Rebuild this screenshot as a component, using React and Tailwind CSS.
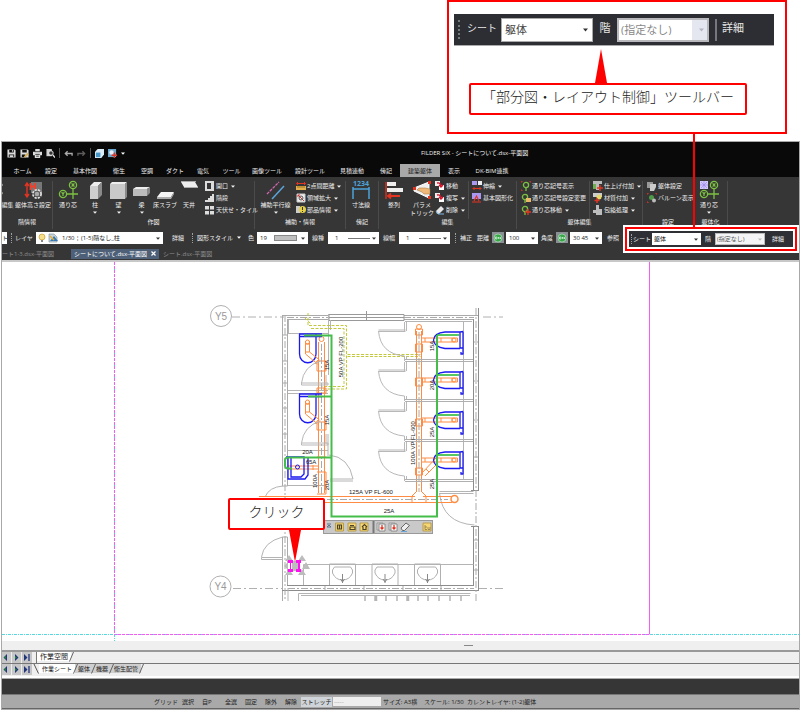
const FONT = "font-['Open_Sans','Noto_Sans_CJK_JP',sans-serif]";

const menuItems = [
    {label: 'ホーム', width: 'w-[29px]'},
    {label: '設定', width: 'w-[28px]'},
    {label: '基本作図', width: 'w-[40px]'},
    {label: '衛生', width: 'w-[28px]'},
    {label: '空調', width: 'w-[28px]'},
    {label: 'ダクト', width: 'w-[28px]'},
    {label: '電気', width: 'w-[28px]'},
    {label: 'ツール', width: 'w-[29px]'},
    {label: '画像ツール', width: 'w-[42px]'},
    {label: '設計ツール', width: 'w-[44px]'},
    {label: '見積連動', width: 'w-[40px]'},
    {label: '傍記', width: 'w-[28px]'},
    {label: '建築躯体', width: 'w-[40px]', active: true},
    {label: '表示', width: 'w-[28px]'},
    {label: 'DK-BIM連携', width: 'w-[48px]'}
];

function Caret({className = 'text-white'}) {
    return (
        <svg viewBox="0 0 4 3" className={`h-[3px] w-1 shrink-0 ${className}`}>
            <path d="M0 0.5h4L2 2.8z" fill="currentColor" />
        </svg>
    );
}

function Handle({className = 'w-2'}) {
    return (
        <span className={`flex shrink-0 justify-center ${className}`}>
            <span className="h-[10px] border-l border-dotted border-[#a0a0a0]" />
        </span>
    );
}

/* ---- title bar icons ---- */

const quickIcons = {
    save: (
        <>
            <path d="M0.500 0.500h8l1 1v8h-9z" fill="#dcdcdc" />
            <path d="M2.500 1h5v3h-5zM2 6h6v3H2z" fill="#111" />
            <path d="M3 7h4v2H3zM5.500 1h1v2h-1z" fill="#dcdcdc" />
        </>
    ),
    saveAs: (
        <>
            <path d="M0.500 0.500h8l1 1v8h-9z" fill="#dcdcdc" />
            <path d="M2.500 1h5v3h-5zM2 6h4v3H2z" fill="#111" />
            <path d="M5 9l4-4" stroke="#d8b05a" strokeWidth="2" />
        </>
    ),
    print: (
        <>
            <path d="M2.500 0h5v3h-5zM0 3h10v4H0zM2 6h6v4H2z" fill="#dcdcdc" />
            <path d="M2 3h6M2.500 6h5M3.500 8h3" stroke="#111" strokeWidth=".8" />
        </>
    ),
    preview: (
        <>
            <path d="M0.500 0h6v8h-6z" fill="#cfcfcf" />
            <circle cx="5.500" cy="4.500" r="2.500" fill="#333" stroke="#eee" />
            <path d="M7.500 6.500l2.500 3" stroke="#eee" strokeWidth="1.500" />
        </>
    ),
    undo: <path d="M9 7.500V5H1.500M4 2.500L1.500 5 4 7.500" stroke="#aaa" strokeWidth="1.500" fill="none" />,
    redo: <path d="M1 7.500V5h7.500M6 2.500L8.500 5 6 7.500" stroke="#5c5c5c" strokeWidth="1.500" fill="none" />,
    cube: (
        <>
            <path d="M0 3l3-3h7v6L7 10H0z" fill="#d9ecf7" />
            <path d="M1 4h5v5H1z" fill="#4696c8" />
        </>
    ),
    capture: (
        <>
            <path d="M0 0h9v9H0z" fill="#6aa5cc" />
            <circle cx="4" cy="4" r="2.500" fill="#e5eef5" />
            <path d="M7 4v6M4 7h6" stroke="#e33422" strokeWidth="1.600" />
        </>
    )
};

function QuickButton({icon, label}) {
    return (
        <button type="button" aria-label={label}>
            <svg viewBox="0 0 10 10" className="size-[9px]">{quickIcons[icon]}</svg>
        </button>
    );
}

/* ---- ribbon icons ---- */

function GridMark() {
    return (
        <g fill="none" stroke="#7cc142" strokeWidth="1.3">
            <circle cx="14" cy="4" r="3.6" />
            <circle cx="4" cy="13" r="3.6" />
            <path d="M14 8v10M8 13h11M12.6 2.4l2.8 3.2M15.4 2.4l-2.8 3.2M2.6 11.2L4 13l1.4-1.8M4 13v2" />
        </g>
    );
}

const bigIcons = {
    edit: <path d="M0 1h3l2 3-3 4 3 4-3 5H0z" fill="#b5b5a5" />,
    height: (
        <>
            <path d="M7 1h11v11H7z" fill="#777" />
            <path d="M3 3v12M1 5l2-3 2 3M1 13l2 3 2-3" stroke="#e33422" strokeWidth="1.4" fill="none" />
            <path d="M6.5 2v7M11 2v7M6.500 5.500h4.500" stroke="#f0402c" strokeWidth="1.8" fill="none" />
            <circle cx="13" cy="13" r="4" fill="none" stroke="#ddd" strokeWidth="2" strokeDasharray="2.2 1" />
            <circle cx="13" cy="13" r="2.800" fill="#aaa" stroke="#555" />
        </>
    ),
    grid: <GridMark />,
    column: (
        <>
            <path d="M4 5l4-4h8l-4 4z" fill="#eee" />
            <path d="M4 5h8v13H4z" fill="#cfcfcf" />
            <path d="M12 5l4-4v13l-4 4z" fill="#8a8a8a" />
        </>
    ),
    wall: (
        <>
            <path d="M1 3l2-2h15l-2 2z" fill="#eee" />
            <path d="M1 3h15v15H1z" fill="#c9c9c9" />
            <path d="M16 3l2-2v15l-2 2z" fill="#8a8a8a" />
        </>
    ),
    beam: (
        <>
            <path d="M1 8l3-2h14l-3 2z" fill="#eee" />
            <path d="M1 8h14v7H1z" fill="#bbb" />
            <path d="M15 8l3-2v6l-3 3z" fill="#888" />
        </>
    ),
    slab: (
        <>
            <path d="M1 16l4-5h13l-3 5z" fill="#f4f4f4" />
            <path d="M1 16h14v2H1zM15 16l3-5v2l-3 5z" fill="#aaa" />
        </>
    ),
    ceiling: (
        <>
            <path d="M1 1l3 5h14l-3-5z" fill="#eee" />
            <path d="M1 1h15v-1H1zM4 6h14v1H4z" fill="#aaa" />
        </>
    ),
    parallel: (
        <>
            <path d="M1 13L13 1" stroke="#d268b4" strokeWidth="1.300" strokeDasharray="3 1" />
            <path d="M6 18L18 5" stroke="#5aa5dc" strokeWidth="1.500" />
        </>
    ),
    dimension: (
        <>
            <path d="M1 8h16M1 6v12M17 6v12" stroke="#4ba3d8" strokeWidth="1.500" fill="none" />
            <text x="9" y="5" textAnchor="middle" fontSize="7" fontWeight="bold" fill="#4ba3d8">1234</text>
        </>
    ),
    align: (
        <>
            <path d="M1 1v17" stroke="#e33422" strokeWidth="1.300" />
            <path d="M2 1h9v4H2zM2 7h16v4H2z" fill="#eee" />
            <path d="M3 15h12M6 12.500L3 15l3 2.500" stroke="#e33422" strokeWidth="1.800" fill="none" />
        </>
    ),
    parametric: (
        <>
            <path d="M1 7L16 1v16L1 10z" fill="#eee" stroke="#fff" />
            <path d="M6 7h6l5 1v5h-6l-2-2-5-2z" fill="#eeb878" stroke="#a4713a" strokeWidth=".5" />
            <path d="M0 6h3v3H0zM15 0h3v3h-3zM15 15h3v3h-3z" fill="#e33422" />
        </>
    ),
    framing: (
        <>
            <path d="M0 0h8v8H0z" fill="#d5c8ff" />
            <path d="M1 1l6 6M7 1L1 7M4 0v8M0 4h8" stroke="#9d86e8" strokeWidth=".7" />
            <GridMark />
        </>
    )
};

const smallIcons = {
    opening: <path d="M0 0h9v10H0zM2 2v6h4V2z" fill="#ddd" fillRule="evenodd" />,
    stairs: <path d="M0 9h9V1H7v2H5v2H3v2H0z" fill="#ddd" />,
    tiles: <path d="M0 1h4v3.500H0zM5 1h4v3.500H5zM0 6h4v3.500H0zM5 6h4v3.500H5z" fill="#ddd" />,
    ruler: (
        <>
            <path d="M0 5h10v4H0z" fill="#e3b04b" />
            <path d="M1 2.500h8M2 1L.5 2.500 2 4M8 1l1.500 1.500L8 4" stroke="#e33422" fill="none" />
            <path d="M2 5v2M4 5v2M6 5v2M8 5v2" stroke="#6c4c10" strokeWidth=".6" />
        </>
    ),
    zoomArea: (
        <>
            <path d="M1 1h8v8H1z" fill="#eee" stroke="#ccc" />
            <path d="M2 2l6 6M2 4V2h2" stroke="#d33" fill="none" />
            <circle cx="5" cy="5" r="2" fill="none" stroke="#555" />
        </>
    ),
    partInfo: (
        <>
            <path d="M0 1h4v7H0z" fill="#ccc" />
            <circle cx="6.500" cy="4.500" r="3.500" fill="#e6cf45" />
            <path d="M6.500 2v3M6.500 6v1" stroke="#333" />
        </>
    ),
    move: (
        <>
            <path d="M0 0h5v5H0z" fill="#eee" />
            <path d="M4 4h5v5H4z" fill="#fff" />
            <path d="M2 2q4-1 4 4M4 4l2 2 2-2" stroke="#d8112b" strokeWidth="1.400" fill="none" />
        </>
    ),
    erase: (
        <>
            <path d="M1 6l5-5 3 3-5 5H2z" fill="#e5e5e5" />
            <path d="M1 6l2 3h6" stroke="#7eb6e0" fill="none" />
        </>
    ),
    stretch: (
        <>
            <path d="M0 0h5v4H0z" fill="#aa98f0" />
            <path d="M6 0h4v4H6z" fill="#eee" />
            <path d="M1 7.500h8M2.500 6L1 7.500 2.500 9M7.500 6L9 7.500 7.500 9" stroke="#e33422" fill="none" />
        </>
    ),
    basicShape: (
        <>
            <path d="M0 0h9v6H0z" fill="#aa98f0" />
            <path d="M0 9h9M2 8l2.500-5L7 8" stroke="#e33422" strokeWidth="1.200" fill="none" />
        </>
    ),
    markShow: (
        <>
            <path d="M0 2V0h2M8 0h2v2M0 8v2h2" stroke="#e33422" fill="none" />
            <circle cx="5" cy="4" r="2.600" fill="none" stroke="#7cc142" strokeWidth="1.300" />
            <path d="M5 6.500V10" stroke="#7cc142" strokeWidth="1.300" />
        </>
    ),
    markEdit: (
        <>
            <circle cx="4" cy="4" r="2.600" fill="none" stroke="#7cc142" strokeWidth="1.300" />
            <path d="M4 6.500V10" stroke="#7cc142" strokeWidth="1.300" />
            <path d="M5 5h5v4H5z" fill="#e9b868" />
        </>
    ),
    markMove: (
        <>
            <circle cx="4" cy="4" r="2.600" fill="none" stroke="#7cc142" strokeWidth="1.300" />
            <path d="M4 6.500V10" stroke="#7cc142" strokeWidth="1.300" />
            <path d="M7 4v6M4 7h6" stroke="#e33422" strokeWidth="1.400" />
        </>
    ),
    finish: (
        <>
            <path d="M0 0h9v3H6v6H3V3H0z" fill="#bbb" />
            <path d="M0 3h3v5H0z" fill="#6dae50" />
            <path d="M7 4v6M4 7h6" stroke="#e33422" strokeWidth="1.400" />
        </>
    ),
    material: (
        <>
            <path d="M0 0h9v4H0z" fill="#ccc" />
            <circle cx="6" cy="4" r="2.500" fill="#e8d968" />
            <path d="M4 5v5M1.500 7.500h5" stroke="#e33422" strokeWidth="1.400" />
        </>
    ),
    wrap: <path d="M3 0h3v4h3v6H3V8H0V5h3z" fill="#bdbdbd" />,
    frameSet: (
        <>
            <path d="M0 1h6v6H0z" fill="#999" />
            <path d="M3 3h6v3L7 10H3z" fill="#ccc" />
        </>
    ),
    balloon: (
        <>
            <path d="M0 2V0h2M8 0h2v2M0 8v2h2" stroke="#e33422" fill="none" />
            <circle cx="4.500" cy="4.500" r="2.500" fill="#4f9a46" />
            <circle cx="7" cy="7.500" r="2" fill="#bbb" />
        </>
    )
};

function BigTool({icon, label, second, width, caret}) {
    return (
        <button type="button" className={`flex h-full shrink-0 flex-col items-center ${width}`}>
            <svg viewBox="0 0 19 19" className="size-[19px] shrink-0 overflow-visible">{bigIcons[icon]}</svg>
            <span className="mt-[2px] leading-none whitespace-nowrap">{label}</span>
            {second && <span className="mt-[2px] leading-none whitespace-nowrap">{second}</span>}
            {caret && <Caret className="mt-[3px]" />}
        </button>
    );
}

function SmallTools({tools, width}) {
    return (
        <div className={`flex shrink-0 flex-col gap-[2px] ${width}`}>
            {tools.map((tool) => (
                <button key={tool.label} type="button" className="flex h-[10px] items-center gap-px whitespace-nowrap">
                    <svg viewBox="0 0 10 10" className="size-[10px] shrink-0">{smallIcons[tool.icon]}</svg>
                    <span className="leading-none">{tool.label}</span>
                    {tool.caret && <Caret className="ml-[2px]" />}
                </button>
            ))}
        </div>
    );
}

function Group({label, width, children}) {
    return (
        <section className={`flex h-12 shrink-0 flex-col border-r border-[#4b4b4b] ${width}`}>
            <div className="flex h-[38px] shrink-0">{children}</div>
            <h2 className="text-center leading-none whitespace-nowrap">{label}</h2>
        </section>
    );
}

function Ribbon() {
    return (
        <div className="flex h-[52px] overflow-hidden bg-[#363636] pt-1 text-[6px] text-[#f0f0f0]">
            <Group label="階情報" width="w-[51px]">
                <BigTool icon="edit" label="編集" width="w-[11px]" />
                <BigTool icon="height" label="躯体高さ設定" width="w-[40px]" />
            </Group>
            <Group label="作図" width="w-[202px]">
                <BigTool icon="grid" label="通り芯" width="w-[30px]" />
                <BigTool icon="column" label="柱" width="w-[24px]" caret />
                <BigTool icon="wall" label="壁" width="w-[23px]" caret />
                <BigTool icon="beam" label="梁" width="w-[23px]" caret />
                <BigTool icon="slab" label="床スラブ" width="w-[24px]" />
                <BigTool icon="ceiling" label="天井" width="w-[24px]" />
                <SmallTools
                    width="ml-1 w-[50px]"
                    tools={[
                        {icon: 'opening', label: '開口', caret: true},
                        {icon: 'stairs', label: '階段'},
                        {icon: 'tiles', label: '天伏せ・タイル'}
                    ]}
                />
            </Group>
            <Group label="補助・情報" width="w-[91px]">
                <BigTool icon="parallel" label="補助平行線" width="w-[41px]" caret />
                <SmallTools
                    width="w-[50px]"
                    tools={[
                        {icon: 'ruler', label: '2点間距離', caret: true},
                        {icon: 'zoomArea', label: '領域拡大', caret: true},
                        {icon: 'partInfo', label: '部品情報', caret: true}
                    ]}
                />
            </Group>
            <Group label="傍記" width="w-[33px]">
                <BigTool icon="dimension" label="寸法線" width="w-[30px]" />
            </Group>
            <Group label="編集" width="w-[138px]">
                <BigTool icon="align" label="整列" width="w-[30px]" />
                <BigTool icon="parametric" label="パラメ" second="トリック" width="w-[26px]" />
                <SmallTools
                    width="w-[32px]"
                    tools={[
                        {icon: 'move', label: '移動'},
                        {icon: 'move', label: '複写', caret: true},
                        {icon: 'erase', label: '削除', caret: true}
                    ]}
                />
                <div className="ml-px border-l border-[#4b4b4b] pl-[3px]">
                    <SmallTools
                        width="w-[44px]"
                        tools={[
                            {icon: 'stretch', label: '伸縮', caret: true},
                            {icon: 'basicShape', label: '基本図形化'}
                        ]}
                    />
                </div>
            </Group>
            <Group label="躯体編集" width="w-[126px]">
                <SmallTools
                    width="ml-1 w-[68px]"
                    tools={[
                        {icon: 'markShow', label: '通り芯記号表示'},
                        {icon: 'markEdit', label: '通り芯記号設定変更'},
                        {icon: 'markMove', label: '通り芯移動', caret: true}
                    ]}
                />
                <div className="border-l border-[#4b4b4b] pl-[3px]">
                    <SmallTools
                        width="w-[48px]"
                        tools={[
                            {icon: 'finish', label: '仕上げ付加', caret: true},
                            {icon: 'material', label: '材質付加', caret: true},
                            {icon: 'wrap', label: '包絡処理', caret: true}
                        ]}
                    />
                </div>
            </Group>
            <Group label="設定" width="w-[51px]">
                <SmallTools
                    width="ml-1 w-[46px]"
                    tools={[
                        {icon: 'frameSet', label: '躯体設定'},
                        {icon: 'balloon', label: 'バルーン表示'}
                    ]}
                />
            </Group>
            <Group label="躯体化" width="w-[34px]">
                <BigTool icon="framing" label="通り芯" width="w-[30px]" caret />
            </Group>
        </div>
    );
}

/* ---- option bar ---- */

function Field({label, value, width, pad = 'pl-[6px]', tone = 'border-white bg-white text-[#222]', disabled, children}) {
    return (
        <span className={`relative flex h-3 shrink-0 ${width}`}>
            <select
                aria-label={label}
                disabled={disabled}
                className={`h-full w-full appearance-none border leading-none opacity-100 ${pad} ${tone}`}
            >
                <option>{value}</option>
            </select>
            {children}
            <Caret className={`absolute top-[5px] right-[3px] ${disabled ? 'text-[#bbb]' : 'text-[#333]'}`} />
        </span>
    );
}

function OnToggle() {
    return (
        <button type="button" aria-label="ON" className="flex h-[11px] w-3 shrink-0 items-center justify-center bg-[#8a8f94]">
            <svg viewBox="0 0 10 10" className="size-[10px]">
                <circle cx="5" cy="5" r="4" fill="#37a849" stroke="#c9e8cc" strokeWidth=".6" />
                <path d="M2.500 4h1.500v2H2.500zM5.500 6V4l2 2V4" fill="none" stroke="#fff" strokeWidth=".6" />
            </svg>
        </button>
    );
}

function OptionBar() {
    const line = <span className="pointer-events-none absolute top-[6px] left-[20px] w-[22px] border-t border-[#777]" />;

    return (
        <div className="flex h-[18px] items-center overflow-hidden bg-[#363636] pb-px text-[6px] leading-none whitespace-nowrap text-[#f0f0f0]">
            <span className="flex h-3 w-[5px] shrink-0 items-center overflow-hidden bg-white text-[#333]">ト</span>
            <Handle />
            <span className="w-[21px] shrink-0">レイヤ</span>
            <Field label="レイヤ" value="1/30 ¦ (1-5)階なし_柱" width="w-[127px]" pad="pl-[25px]">
                <svg viewBox="0 0 22 10" className="pointer-events-none absolute top-px left-[2px] h-[10px] w-[22px]">
                    <circle cx="4" cy="4" r="3" fill="#f8e08a" stroke="#c79c35" strokeWidth=".7" />
                    <path d="M3 7h2v2H3z" fill="#888" />
                    <path d="M11 1h5l3 3v5h-8z" fill="#c9d4dc" stroke="#789" strokeWidth=".6" />
                    <path d="M12 8l4-5 4 5z" fill="#347ab8" />
                    <path d="M12 3l4 4" stroke="#e8b12d" strokeWidth="1.400" />
                </svg>
            </Field>
            <button type="button" className="w-[25px] shrink-0 pl-[9px] text-left">詳細</button>
            <Handle className="w-[9px]" />
            <button type="button" className="flex w-[48px] shrink-0 items-center justify-between pr-1">
                図形スタイル
                <Caret />
            </button>
            <span className="w-3 shrink-0 text-center">色</span>
            <Field label="色" value="19" width="w-[51px]" pad="pl-[2px]">
                <span className="pointer-events-none absolute top-[3px] left-[17px] h-[6px] w-[23px] border border-[#888] bg-[#c0c0c0]" />
            </Field>
            <span className="w-5 shrink-0 text-center">線種</span>
            <Field label="線種" value="1" width="w-[51px]">{line}</Field>
            <span className="w-5 shrink-0 text-center">線幅</span>
            <Field label="線幅" value="1" width="w-[51px]">{line}</Field>
            <Handle className="w-[10px]" />
            <span className="w-[14px] shrink-0">補正</span>
            <span className="w-[18px] shrink-0 text-center">距離</span>
            <OnToggle />
            <span className="w-[2px] shrink-0" />
            <Field label="距離" value="100" width="w-[32px]" pad="pl-[2px]" />
            <span className="w-[18px] shrink-0 text-center">角度</span>
            <OnToggle />
            <span className="w-[2px] shrink-0" />
            <Field label="角度" value="30  45" width="w-[32px]" pad="pl-[2px]" />
            <button type="button" className="w-[22px] shrink-0 text-center">参照</button>
        </div>
    );
}

/* ---- plan ---- */

function ToiletLeft({y}) {
    return (
        <g transform={`translate(0 ${y})`}>
            <path d="M299 0h23M299 2.500h23M299.500 0v20a8 8.500 0 0 0 16.500 0V0" stroke="#1a1af0" strokeWidth="1.300" />
            <path d="M305.500 7v13l12 10M309.500 7v11l10 8M305.500 10h4M305.500 18h4M318 26l-3 4" stroke="#ff8c42" />
            <circle cx="307.500" cy="8" r="2" stroke="#ff8c42" />
            <path d="M301.500 51h26.500v-2h-26.500zM301.500 49q2-17 19-22" stroke="#b8b8b8" />
        </g>
    );
}

function ToiletRight({y}) {
    return (
        <g transform={`translate(0 ${y})`}>
            <path d="M421.500 -2h36v4h-36zM425 -2v4M441 -2v4M452 -2v4" stroke="#ff8c42" />
            <circle cx="454" cy="0" r="2" stroke="#ff8c42" />
            <path d="M460 -8h-15q-11 1-11.500 8q.5 7 11.500 8.500h15M460 -8.500v17M463 -8.500v23M460 -8l3-.500M460 8h3M461 12v2h2" stroke="#1a1af0" strokeWidth="1.300" />
            <path d="M437 -5h22" stroke="#22b42c" strokeWidth="1.500" />
            <path d="M378.500 -10h27M378.500 -8.500h27M378.500 -9q2 23 26 25M404.500 -18v9M406.500 -18v9M404.500 16v5M406.500 16v4" stroke="#b8b8b8" />
            <path d="M405 19.500h68M405 21.500h68" stroke="#b0b0b0" />
        </g>
    );
}

function Basin({x}) {
    return (
        <g stroke="#b0b0b0">
            <path d={`M${x - 13} 585v-21h26v21`} />
            <path d={`M${x - 8} 567h16q3 3 2 6q-3 7-10 7t-10-7q-1-3 2-6z`} />
            <path d={`M${x} 574v9M${x - 2} 579l2 3l2-3`} stroke="#888" />
        </g>
    );
}

function PlanText({x, y, turn, children}) {
    return (
        <text
            x={x}
            y={y}
            textAnchor="middle"
            dominantBaseline="central"
            transform={turn ? `rotate(-90 ${x} ${y})` : undefined}
            fontSize="6"
            fill="#222"
            stroke="none"
            fontFamily="Liberation Sans, sans-serif"
        >
            {children}
        </text>
    );
}

function Plan() {
    return (
        <svg viewBox="2 262 797 379" preserveAspectRatio="xMinYMin meet" className="block h-[379px] w-full" fill="none">
            {/* paper frame */}
            <path d="M2 634.500h797M114.500 262v379" stroke="#55d8e0" strokeDasharray="3 1 1 1" />
            <path d="M649.500 262v372.500" stroke="#f45cf4" />
            <path d="M114.500 262v372.500h535" stroke="#f45cf4" strokeDasharray="3 1" />

            {/* grid marks */}
            <g stroke="#b0b0b0">
                <circle cx="221" cy="316" r="10.500" />
                <circle cx="220.500" cy="586.500" r="10.500" />
                <path d="M232 317h52M483 317h20M233 588.500h50M479 588.500h25" strokeDasharray="8 3 2 3" />
            </g>
            <g fill="#999" fontSize="10" textAnchor="middle" fontFamily="Liberation Sans, sans-serif">
                <text x="221" y="320">Y5</text>
                <text x="220.500" y="590">Y4</text>
            </g>

            {/* walls */}
            <g stroke="#aaa">
                <path d="M282.500 315v171M287.500 319v167M282.500 486h5M282.500 537v64M287.500 537v48M282.500 537h5" />
                <path d="M282.500 315.500h46M287 319.500h41M404 315.500h74M404 319.500h69" />
                <path d="M329 314.500h75v6h-75zM329 317.500h75M366.500 311v10" stroke="#999" />
                <path d="M478.500 308v182M473.500 319v171M471 490.500h8M471 526.500h8M473.500 526v60M478.500 526v65" stroke="#8c8c8c" />
                <path d="M287 585.500h186M282 590.500h197" stroke="#8c8c8c" />
                <path d="M285 315v286M476 308v293M287 317.500h41M404 317.500h70M288 588.500h186" strokeDasharray="7 2 2 2" />
                <path d="M283 335h4M283 361h4M283 383h4M283 408h4M283 434h4M474 342h4M474 381h4M474 420h4M474 457h4M474 540h4M474 570h4M364 586v4M403 586v4M441 586v4M325 586v4" />
            </g>

            {/* partitions and doors */}
            <g stroke="#b4b4b4">
                <path d="M328.500 314v61M330.500 320v10M288 333.500h40M288 390.500h40M288 393.500h40M288 450.500h40M288 485.500h36M288.500 320v13M326 375v10M328 434v22M326 434v10" />
                <path d="M329 455q20 2 24 24h-23M330 481h23" />
                <path d="M463.500 322v158M405 321.500h67" />
                <path d="M261.500 557.500h21v2h-21zM261.500 557q2-15 21-20M265 497q4-10 18-11" />
                <path d="M439.500 491.500h34M439.500 493.500h34M439.500 493q3 30 35 32" />
                <path d="M303.500 585v-20.500h170M298.500 601v-7.500h172M301 595.500h169M288 588v13" />
                <path d="M365 596v5M375 596v5M376.500 596v5M386 596v5M397 596v5M407 596v5M408.500 596v5M418 596v5M428 596v5M439 596v5M450 596v5M461 596v5" strokeWidth="1.500" />
            </g>
            <Basin x={342.5} />
            <Basin x={385} />
            <Basin x={427.5} />

            {/* vent */}
            <path
                d="M308 313v12.500h38.500v63.500h-24M311 328.500h33v58h-22M347.500 354.500h73M347.500 356.500h73M305 318l6 6"
                stroke="#c3c83c"
                strokeDasharray="3 1.500"
            />

            {/* drain */}
            <g stroke="#ff8c42">
                <path d="M318.500 342v151M324.500 342v151M416.500 331v161M421.500 331v161" />
                <path d="M259 496.500h156M259 502.500h193M423 496.500h29" />
                <path d="M317 361h9v10h-9zM317 388h9v5h-9zM317 422h9v8h-9zM317 457h9M317 472h9v22h-9" />
                <path d="M415.500 329h7v6h-7zM415.500 344h7v8h-7zM415.500 378h7v8h-7zM415.500 419h7v7h-7zM415.500 468h7v7h-7zM416 492l-4 4M422 492l4 4M412 496v7M426 496v7" />
                <path d="M422 473l14-15M425 476l13-13M426 469l3 3M288 466h30M288 469h30M313 465v5" />
                <circle cx="321.500" cy="339" r="2.500" />
                <circle cx="419" cy="327" r="2.500" />
                <circle cx="454.500" cy="499" r="3.500" strokeWidth="1.500" />
            </g>
            <path d="M321.500 344v150M419 332v160M262 499.500h186" stroke="#aaa" strokeDasharray="7 2 2 2" />

            <ToiletLeft y={334} />
            <ToiletLeft y={394} />
            <ToiletRight y={340} />
            <ToiletRight y={380} />
            <ToiletRight y={420} />
            <ToiletRight y={460} />
            <path d="M291 457h13v17l-3 3h-10zM288 457v22h17l3-4v-17M286 457h18" stroke="#1a1af0" strokeWidth="1.300" />
            <circle cx="297.500" cy="467" r="2" stroke="#1a1af0" />

            {/* supply */}
            <path
                d="M304 335.500h27.500V516.500h105.500V335M308 396.500h23M331 457.500h-43q-3 0-3 3v5q0 3 3 3h4"
                stroke="#45bd4a"
                strokeWidth="2"
            />

            <PlanText x={341} y={357} turn>50A VP FL-200</PlanText>
            <PlanText x={412.5} y={443} turn>100A VP FL-600</PlanText>
            <PlanText x={371} y={492}>125A VP FL-600</PlanText>
            <PlanText x={389} y={511}>25A</PlanText>
            <PlanText x={307.5} y={452}>20A</PlanText>
            <PlanText x={311} y={462}>65A</PlanText>
            <PlanText x={327} y={365} turn>15A</PlanText>
            <PlanText x={327} y={420} turn>15A</PlanText>
            <PlanText x={315} y={481} turn>100A</PlanText>
            <PlanText x={327} y={485} turn>20A</PlanText>
            <PlanText x={432} y={346} turn>15A</PlanText>
            <PlanText x={432} y={385} turn>20A</PlanText>
            <PlanText x={432} y={432} turn>25A</PlanText>
            <PlanText x={432} y={484} turn>25A</PlanText>

            {/* selected column */}
            <path d="M289 555l4 6h-8zM302 555l4 6h-8zM289 569l4 6h-8zM302 569l4 6h-8zM284 566l4-4v8zM306 562l4 7h-8zM292 561h6v10h-6z" fill="#bcbcbc" />
            <path d="M288 560h5v3h-2v6h2v3h-5v-3h2v-6h-2zM301 560h-5v3h2v6h-2v3h5v-3h-1v-6h1z" fill="#ff10f0" />
        </svg>
    );
}

function FloatingBar() {
    return (
        <div className="absolute top-[258px] left-[321px] flex h-[14px] w-[110px] items-center border border-[#999] bg-[#c9c9c9]">
            <svg viewBox="0 0 108 12" className="h-3 w-[108px]" fill="none">
                <path d="M3 3h4M3 6l2-2 2 2z" stroke="#5b7892" />
                <path d="M11.500 2h8v8h-8zM24 2h8v8h-8zM36 2h8v8h-8zM99 2h8v8h-8z" fill="#f7d774" stroke="#b89d4a" />
                <path d="M13.500 4h4v4h-4zM15.500 4v4M26 6h5v2.500h-5zM26 4.500h4M38 6l2.500-2.500L43 6M39 6v2.500h3V6" stroke="#4c4326" strokeWidth="1.200" />
                <path d="M101 4v4.500h2M101 6h2M104 6v2.500h2V6" stroke="#8c7a48" strokeWidth=".8" />
                <path d="M49.500 0v12" stroke="#777" strokeWidth="2" />
                <path d="M53 2h6v7h-6zM65 2h6v7h-6z" fill="#ddd" stroke="#999" />
                <path d="M55 3h6v7h-6zM67 3h6v7h-6z" fill="#fff" stroke="#888" />
                <path d="M58 4v4M56.500 6.500L58 8l1.500-1.500M70 4v4M68.500 6.500L70 8l1.500-1.500" stroke="#e33422" strokeWidth="1.300" />
                <path d="M77 7l5-5 3.500 2.500-5 5h-2z" fill="#eee" stroke="#666" />
                <path d="M77 10.500h6" stroke="#6aa7d8" />
            </svg>
        </div>
    );
}

function SheetArrows() {
    return (
        <svg viewBox="0 0 30 11" className="h-[11px] w-[30px] shrink-0 bg-[#c6c6c6]">
            <path d="M5 2v7L1.500 5.500zM13 2v7l3.500-3.500zM22 2v7l3.500-3.500z" fill="#21357c" />
            <path d="M4 4v3L2 5.500zM13 4v3l2-1.500z" fill="#1c8a35" />
            <path d="M27 2v7" stroke="#21357c" strokeWidth="1.300" />
            <path d="M9.500 0v11M19.500 0v11" stroke="#eee" />
        </svg>
    );
}

function SheetTab({label, active}) {
    return (
        <button type="button" className={`relative h-[9px] shrink-0 px-[3px] leading-none ${active ? 'bg-white' : 'bg-[#cfcfcf]'}`}>
            {label}
            <svg viewBox="0 0 5 10" className="absolute top-0 -right-[3px] z-10 h-[10px] w-[5px]">
                <path d="M0.500 9.500L4.500 0" stroke="#555" strokeWidth=".9" />
            </svg>
        </button>
    );
}

function StatusBar() {
    return (
        <footer className="flex h-[13px] items-center overflow-hidden bg-[#a9a9a9] pl-[152px] text-[6px] leading-none whitespace-nowrap text-[#222]">
            <button type="button" className="w-[28px] shrink-0 text-left">グリッド</button>
            <button type="button" className="w-[20px] shrink-0 text-left">選択</button>
            <button type="button" className="w-[23px] shrink-0 text-left">自P</button>
            <button type="button" className="w-[20px] shrink-0 text-left">全選</button>
            <button type="button" className="w-[20px] shrink-0 text-left">固定</button>
            <button type="button" className="w-[20px] shrink-0 text-left">除外</button>
            <button type="button" className="w-[16px] shrink-0 text-left">解除</button>
            <button type="button" className="h-[10px] w-[31px] shrink-0 bg-[#cfd4d8] text-center">ストレッチ</button>
            <input
                aria-label="長さ"
                defaultValue="-----"
                className="ml-px h-[9px] w-[48px] shrink-0 bg-[#eee] pl-px text-[#999]"
            />
            <span className="ml-[2px] w-[41px] shrink-0">サイズ: A3横</span>
            <span className="w-[43px] shrink-0">スケール: 1/30</span>
            <span className="shrink-0">カレントレイヤ: (1-2)躯体</span>
        </footer>
    );
}

/* ---- callouts ---- */

function SheetBarSmall() {
    return (
        <div className="absolute top-[83px] right-0 border-2 border-white bg-white">
            <div className="border-2 border-[#f00] bg-white p-[2px]">
                <div className="flex h-4 w-[164px] items-center bg-[#2f3035] text-[6px] leading-none whitespace-nowrap text-[#f0f0f0]">
                    <Handle className="w-1" />
                    <span className="w-[19px] shrink-0">シート</span>
                    <Field label="シート" value="躯体" width="w-[49px]" pad="pl-px" />
                    <span className="w-[14px] shrink-0 text-center">階</span>
                    <Field label="階" value="(指定なし)" width="w-[50px]" pad="pl-px" tone="border-[#bbb] bg-[#f4f4f6] text-[#555]" disabled />
                    <button type="button" className="w-[26px] shrink-0 text-center">詳細</button>
                </div>
            </div>
        </div>
    );
}

function SheetBarLarge() {
    return (
        <div className="flex h-8 items-center border-b border-[#aaa] bg-[#2d2e33] text-[10px] leading-none whitespace-nowrap text-[#e6e6e6]">
            <span className="ml-1 h-[19px] border-l-2 border-dotted border-[#77787d]" />
            <label htmlFor="sheet" className="w-[41px] shrink-0 pb-1 pl-[7px]">シート</label>
            <span className="relative h-6 w-[92px] shrink-0">
                <select id="sheet" className="size-full appearance-none border border-[#aaa] bg-white pl-[3px] text-[11px] text-[#444]">
                    <option>躯体</option>
                </select>
                <ChevronMark className="text-[#333]" />
            </span>
            <label htmlFor="floor" className="w-6 shrink-0 pb-1 text-center text-[11px]">階</label>
            <span className="relative h-6 w-[92px] shrink-0">
                <select id="floor" disabled className="size-full appearance-none border-2 border-[#b9b9bd] bg-white pl-[2px] text-[11px] text-[#888] opacity-100">
                    <option>(指定なし)</option>
                </select>
                <span className="pointer-events-none absolute inset-y-[2px] right-[2px] w-[15px] bg-[#e4e6f0]" />
                <ChevronMark className="text-[#b5b5bd]" />
            </span>
            <span className="ml-[6px] h-[22px] border-l-2 border-[#77787f]" />
            <button type="button" className="ml-[5px] pb-1 text-[11px]">詳細</button>
        </div>
    );
}

function ChevronMark({className}) {
    return (
        <svg viewBox="0 0 5 4" className={`pointer-events-none absolute top-[10px] right-[5px] h-1 w-[5px] ${className}`}>
            <path d="M0 0.500h5L2.500 3.500z" fill="currentColor" />
        </svg>
    );
}

function ToolbarCallout() {
    return (
        <div className="relative h-[134px] w-[340px] border-2 border-[#f00] bg-white px-[5px] pt-3 pr-[11px]">
            <SheetBarLarge />
            <svg viewBox="0 0 12 34" className="mt-[3px] ml-[141px] block h-[34px] w-3">
                <path d="M6 0l6 34H0z" fill="#f00" />
            </svg>
            <p className="ml-[15px] flex h-8 w-[278px] items-center justify-center rounded-xs border-2 border-[#f00] bg-white pb-1 text-[14px] leading-none font-light whitespace-nowrap text-[#222]">
                「部分図・レイアウト制御」ツールバー
            </p>
            <span className="absolute top-[132px] right-[90px] z-10 h-[93px] w-[2px] bg-[#f00]" />
        </div>
    );
}

function ClickCallout() {
    return (
        <div className="absolute top-[236px] left-[226px] flex w-[97px] flex-col">
            <p className="flex h-8 items-center justify-center rounded-xs border-2 border-[#f00] bg-white pb-1 text-[14px] leading-none font-light text-[#222]">
                クリック
            </p>
            <svg viewBox="0 0 12 32" className="ml-[61px] block h-8 w-3">
                <path d="M0 0h12L6 32z" fill="#f00" />
            </svg>
        </div>
    );
}

export default function App() {
    return (
        <div className={`min-w-[803px] bg-white ${FONT}`}>
            <div className="flex h-[141px] justify-end pr-4">
                <ToolbarCallout />
            </div>
            <main className="relative mr-[3px] ml-px border border-[#a8a8a8] bg-[#363636]">
                <header className="bg-[#090909] text-[6px] leading-none text-[#f0f0f0]">
                    <div className="relative flex h-[22px] items-center pl-[5px]">
                        <nav className="flex items-center gap-1" aria-label="クイックアクセス">
                            <QuickButton icon="save" label="保存" />
                            <QuickButton icon="saveAs" label="名前を付けて保存" />
                            <QuickButton icon="print" label="印刷" />
                            <QuickButton icon="preview" label="印刷プレビュー" />
                            <span className="h-[10px] border-l border-[#555]" />
                            <QuickButton icon="undo" label="元に戻す" />
                            <QuickButton icon="redo" label="やり直し" />
                            <span className="h-[10px] border-l border-[#555]" />
                            <QuickButton icon="cube" label="3D表示" />
                            <QuickButton icon="capture" label="切り取り" />
                            <Caret />
                        </nav>
                        <h1 className="absolute top-2 left-[419px] whitespace-nowrap">FILDER SiX - シートについて.dsx-平面図</h1>
                    </div>
                    <nav className="flex h-[13px] pl-[6px]">
                        {menuItems.map((item) => (
                            <button
                                key={item.label}
                                type="button"
                                className={`h-full shrink-0 text-center whitespace-nowrap ${item.width} ${
                                    item.active ? 'bg-[#a9a9a9] text-[#222]' : ''
                                }`}
                            >
                                {item.label}
                            </button>
                        ))}
                    </nav>
                </header>
                <Ribbon />
                <OptionBar />
                <SheetBarSmall />
                <div className="flex h-[15px] items-center border-b-2 border-[#c8c8c8] bg-[#363636] text-[6px] leading-none whitespace-nowrap text-[#8d8d8d]">
                    <button type="button" className="w-[69px] text-left">ート1-3.dsx-平面図</button>
                    <button type="button" className="flex h-[10px] w-[88px] items-center justify-between bg-[#4d6078] px-[3px] text-white">
                        シートについて.dsx-平面図
                        <svg viewBox="0 0 5 5" className="size-[5px]"><path d="M.5.5l4 4M4.500.5l-4 4" stroke="#fff" strokeWidth="1.200" /></svg>
                    </button>
                    <button type="button" className="pl-1">シート.dsx-平面図</button>
                </div>
                <div className="relative bg-white">
                    <Plan />
                    <FloatingBar />
                    <ClickCallout />
                </div>
                <div className="flex h-[9px] items-center bg-[#efefef] pl-[462px]">
                    <span className="w-[9px] border-t border-[#888]" />
                </div>
                <div className="flex h-[13px] border-t-2 border-[#999] bg-[#efefef] text-[7px] text-[#222]">
                    <SheetArrows />
                    <div className="ml-1 flex border-l border-[#777]">
                        <SheetTab label="作業空間" active />
                    </div>
                </div>
                <div className="flex h-[13px] border-t border-[#777] bg-[#efefef] text-[6px] text-[#222]">
                    <SheetArrows />
                    <svg viewBox="0 0 6 10" className="ml-px h-[10px] w-[6px]"><path d="M1 0l4.500 9.500" stroke="#555" /></svg>
                    <SheetTab label="作業シート" active />
                    <SheetTab label="躯体" />
                    <SheetTab label="機器" />
                    <SheetTab label="衛生配管" />
                </div>
                <div className="h-[3px] border-b border-[#aaa] bg-white" />
                <div className="h-4 border-b border-[#777] bg-[#363636]" />
                <StatusBar />
                <div className="h-px bg-[#666]" />
            </main>
        </div>
    );
}
